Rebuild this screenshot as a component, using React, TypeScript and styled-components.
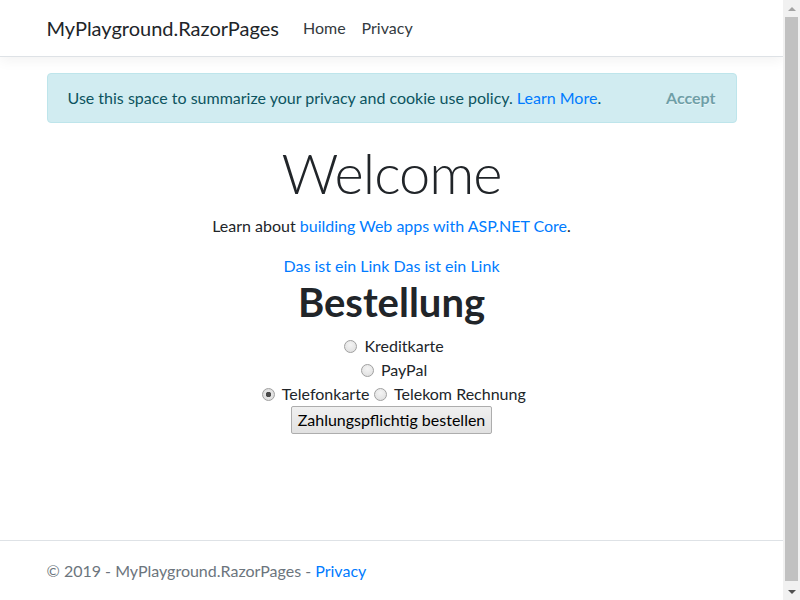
import React from "react";
import styled, { createGlobalStyle } from "styled-components";

const FONT = `"Segoe UI", Lato, "Liberation Sans", sans-serif`;

const Global = createGlobalStyle`
  html, body { margin: 0; padding: 0; overflow: hidden; }
  body {
    font-family: ${FONT};
    font-size: 16px;
    line-height: 1.5;
    color: #212529;
    background: #fff;
  }
  * { box-sizing: border-box; }
`;

const Viewport = styled.div`
  display: flex;
  height: 100vh;
`;

const Page = styled.div`
  flex: 1;
  min-width: 0;
  display: flex;
  flex-direction: column;
`;

const Scrollbar = styled.div`
  width: 17px;
  flex: none;
  background: #f1f1f1;
  display: flex;
  flex-direction: column;
  align-items: center;
`;

const Arrow = styled.div<{ $down?: boolean }>`
  height: 17px;
  width: 17px;
  display: flex;
  align-items: center;
  justify-content: center;
  &::before {
    content: "";
    border-left: 4px solid transparent;
    border-right: 4px solid transparent;
    ${(p) =>
      p.$down
        ? "border-top: 4px solid #505050;"
        : "border-bottom: 4px solid #a3a3a3;"}
  }
`;

const Thumb = styled.div`
  flex: 1;
  width: 13px;
  margin-bottom: 2px;
  background: #c1c1c1;
`;

const Container = styled.div`
  width: 720px;
  margin: 0 auto;
  padding: 0 15px;
`;

const Navbar = styled.header`
  background: #fff;
  border-bottom: 1px solid #dee2e6;
  box-shadow: 0 4px 12px rgba(0, 0, 0, 0.05);
  padding: 8px 0;
  margin-bottom: 16px;
`;

const NavInner = styled(Container)`
  display: flex;
  align-items: center;
`;

const Brand = styled.a`
  font-size: 20px;
  line-height: 30px;
  padding: 5px 0;
  margin-right: 16px;
  color: #212529;
  text-decoration: none;
`;

const NavLink = styled.a`
  padding: 8px;
  color: #343a40;
  text-decoration: none;
`;

const Alert = styled.div`
  position: relative;
  background: #d1ecf1;
  border: 1px solid #bee5eb;
  color: #0c5460;
  border-radius: 4px;
  padding: 12px 64px 12px 20px;
  margin-bottom: 16px;
`;

const Link = styled.a`
  color: #007bff;
  text-decoration: none;
`;

const AcceptButton = styled.button`
  position: absolute;
  top: 0;
  right: 0;
  padding: 12px 20px;
  background: transparent;
  border: 0;
  font-family: ${FONT};
  font-size: 16px;
  font-weight: 700;
  line-height: 24px;
  color: #0c5460;
  opacity: 0.5;
  text-shadow: 0 1px 0 #fff;
  cursor: pointer;
`;

const Main = styled.main`
  text-align: center;
  padding-bottom: 16px;
`;

const Display = styled.h1`
  font-size: 56px;
  font-weight: 300;
  line-height: 1.2;
  letter-spacing: -1px;
  margin: 0 0 8px;
`;

const Para = styled.p`
  margin: 0 0 16px;
`;

const Heading = styled.h1`
  font-size: 40px;
  font-weight: 700;
  line-height: 1.2;
  margin: 0 0 8px;
`;

const Line = styled.div``;

const Radio = styled.input`
  appearance: none;
  width: 13px;
  height: 13px;
  margin: 3px 3px 0 5px;
  border-radius: 50%;
  border: 1px solid #a0a0a0;
  background: radial-gradient(circle at 50% 35%, #f4f4f4 0%, #dcdcdc 100%);
  vertical-align: -1px;
  &:checked {
    background: radial-gradient(circle, #4a4a4a 0 2.5px, #e6e6e6 3px, #d6d6d6 100%);
  }
`;

const Label = styled.label``;

const Submit = styled.button`
  font-family: ${FONT};
  font-size: 16px;
  line-height: 24px;
  color: #000;
  padding: 1px 6px;
  height: 28px;
  border: 1px solid #adadad;
  border-radius: 2px;
  background: linear-gradient(#f0f0f0, #e1e1e1);
  margin: 0;
`;

const Footer = styled.footer`
  margin-top: auto;
  border-top: 1px solid #dee2e6;
  color: #6c757d;
  line-height: 59px;
  white-space: nowrap;
`;

export default function App() {
  return (
    <>
      <Global />
      <Viewport>
        <Page>
          <Navbar>
            <NavInner>
              <Brand href="#">MyPlayground.RazorPages</Brand>
              <NavLink href="#">Home</NavLink>
              <NavLink href="#">Privacy</NavLink>
            </NavInner>
          </Navbar>
          <Container>
            <Alert>
              Use this space to summarize your privacy and cookie use policy.{" "}
              <Link href="#">Learn More</Link>.
              <AcceptButton type="button">Accept</AcceptButton>
            </Alert>
            <Main>
              <Display>Welcome</Display>
              <Para>
                Learn about <Link href="#">building Web apps with ASP.NET Core</Link>.
              </Para>
              <Line>
                <Link href="#">Das ist ein Link</Link> <Link href="#">Das ist ein Link</Link>
              </Line>
              <Heading>Bestellung</Heading>
              <Line>
                <Label>
                  <Radio type="radio" name="pay" /> Kreditkarte
                </Label>
              </Line>
              <Line>
                <Label>
                  <Radio type="radio" name="pay" /> PayPal
                </Label>
              </Line>
              <Line>
                <Label>
                  <Radio type="radio" name="pay" defaultChecked /> Telefonkarte
                </Label>
                <Label>
                  <Radio type="radio" name="pay" /> Telekom Rechnung
                </Label>
              </Line>
              <Submit type="submit">Zahlungspflichtig bestellen</Submit>
            </Main>
          </Container>
          <Footer>
            <Container>
              © 2019 - MyPlayground.RazorPages - <Link href="#">Privacy</Link>
            </Container>
          </Footer>
        </Page>
        <Scrollbar aria-hidden="true">
          <Arrow />
          <Thumb />
          <Arrow $down />
        </Scrollbar>
      </Viewport>
    </>
  );
}
